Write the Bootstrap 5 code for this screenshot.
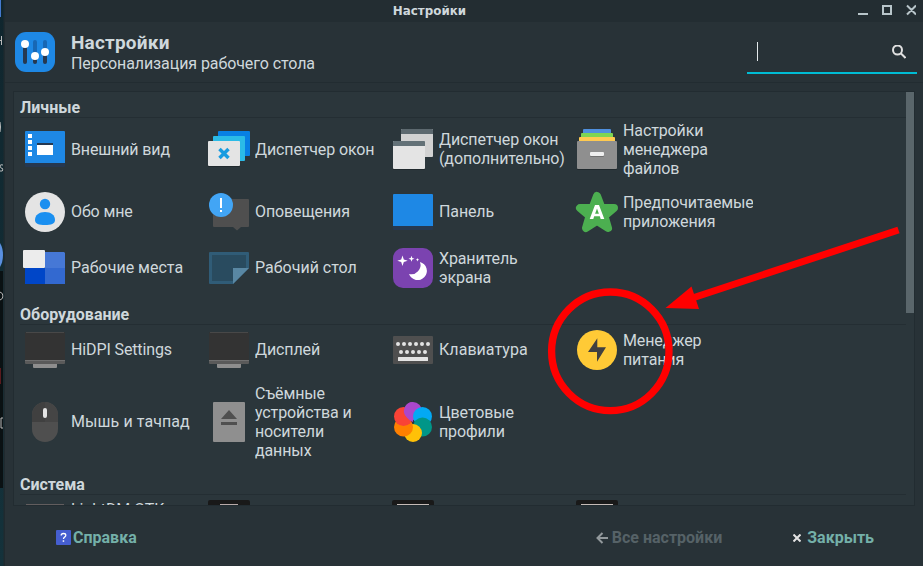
<!DOCTYPE html>
<html lang="ru">
<head>
<meta charset="utf-8">
<meta name="viewport" content="width=device-width, initial-scale=1">
<title>Настройки</title>
<link href="https://cdn.jsdelivr.net/npm/bootstrap@5.3.0/dist/css/bootstrap.min.css" rel="stylesheet">
<style>
body{width:923px;height:566px;overflow:hidden;background:#283237;color:#cfd8dc;font:16px/19px Roboto,"Noto Sans",sans-serif}
svg{display:block;flex:none}
.desk{width:5px;height:566px;flex:none}
.win{width:918px;height:566px}
.titlebar{height:22px;background:#232d32;font:bold 11.9px/22px "DejaVu Sans",sans-serif;padding-right:7px}
.titlebar .caption{padding-right:2px}
.head{height:61px;border-bottom:1px solid #222c31;padding:0 6px 0 10px}
.head .big{font-size:19px;line-height:22px;font-weight:700;letter-spacing:.2px}
.subtitle{letter-spacing:-.08px}
.search{width:170px;height:43px;margin-top:9px;border-bottom:2px solid #00bcd4;padding:0 11px 0 10px}
.caret{width:1px;height:19px;background:#e4e9eb}
.pane{width:902px;height:415px;margin:8px 0 0 8px;background:#2b363b;border:1px solid #222c31}
.thumb{width:8px;height:221px;background:#5a666b}
.groups{width:892px;height:413px;overflow:hidden;padding-left:6px}
.groups h2{font-size:16px;line-height:20px;font-weight:700;margin:0;padding-top:1px;border-bottom:1px solid #242e33;height:21px}
.tiles{display:grid;grid-template-columns:repeat(4,184px);padding-left:3px}
.personal{grid-template-rows:62px 62px 50px;margin-bottom:12px}
.hardware{grid-template-rows:48px 96px;margin-bottom:5px}
.system{grid-template-rows:56px}
.tile{gap:4px;min-width:0}
.tile span{width:130px;overflow:hidden;white-space:nowrap;letter-spacing:-.12px}
.tile .lower{padding-top:2px}
.foot{height:60px;padding:3px 49px 0 51px;font-weight:700;color:#74b0a9}
.dim{color:#566267}
</style>
<script src="https://cdn.jsdelivr.net/npm/bootstrap@5.3.0/dist/js/bootstrap.bundle.min.js"></script>
</head>
<body class="position-relative">
<div class="d-flex">
<svg class="desk" width="5" height="566" viewBox="0 0 5 566"><defs><linearGradient id="wall" x2="0" y2="1"><stop stop-color="#10262e"/><stop offset="1" stop-color="#14323b"/></linearGradient></defs>
<path fill="url(#wall)" d="M0 0h5v566H0z"/><path fill="#0a1113" d="M0 271h3v217H0z"/><path fill="#4479cf" d="M0 0h1v17H0z"/><path fill="#5a8fe0" d="M0 243q3 5 3 12t-3 12z"/><path fill="#5a1a1e" d="M0 368h1v16H0z"/><path d="M1.500 36v9M0 40.500h1.500M3 165q-3-1-3 1t3 3q0 3-3 2M0 292q3 1 3 4t-3 4M3 418H1v10h2M0 122q1 5 0 10" fill="none" stroke="#bbb"/><path fill="#202a2f" d="M3.500 0h1.500v566H3.500z"/></svg>
<main class="win d-flex flex-column">
  <div class="titlebar d-flex align-items-center">
    <div class="caption flex-grow-1 text-center">Настройки</div>
    <svg width="60" height="22" viewBox="0 0 60 22" fill="none" stroke="#b8c5ca" stroke-width="2"><path d="M2 14h10M27 6h8v8h-8zM51 5.500l9 9M60 5.500l-9 9"/></svg>
  </div>
  <header class="head d-flex">
    <svg class="mt-2" style="margin-right:16px" width="40" height="44" viewBox="0 0 40 44"><rect y="2" width="40" height="40" rx="11" fill="#1e88e5"/><g stroke-width="4" stroke-linecap="round"><path stroke="#1867b4" d="M10 12v10M20 12v18M30 12v10"/><path stroke="#263850" d="M10 14v18M20 28v4M30 24v8"/></g><g fill="#fff"><circle cx="10" cy="14" r="4"/><circle cx="20" cy="26" r="4"/><circle cx="30" cy="22" r="4"/></g></svg>
    <div class="flex-grow-1" style="padding-top:10px"><div class="big">Настройки</div><div class="subtitle">Персонализация рабочего стола</div></div>
    <div class="search d-flex align-items-center justify-content-between"><div class="caret"></div><svg width="14" height="14" viewBox="0 0 14 14" fill="none" stroke="#e0e0e0" stroke-width="2"><circle cx="5.500" cy="5" r="4.500"/><path d="M8.500 8l5 5"/></svg></div>
  </header>
  <section class="pane d-flex">
    <div class="groups">
      <h2 style="margin-top:5px">Личные</h2>
      <div class="tiles personal">
        <div class="tile d-flex align-items-center"><svg width="44" height="44"><rect x="2" y="5" width="40" height="35" rx="1" fill="#263850"/><path fill="#1e88e5" d="M2 36V5q0-1 1-1h38q1 0 1 1v31z"/><path fill="#fff" d="M5 7h4v4H5zM5 13h4v4H5zM5 19h4v4H5zM5 25h4v4H5zM14 17h16v11H14z"/><path fill="#263850" d="M14 16h16v2H14z"/></svg><span>Внешний вид</span></div>
        <div class="tile d-flex align-items-center"><svg width="44" height="44"><rect x="11" y="4" width="32" height="25" rx="1" fill="#0880e4"/><rect x="6" y="9" width="32" height="25" rx="1" fill="#2bbbe7"/><rect x="1" y="15" width="32" height="25" rx="1" fill="#20292d"/><rect x="1" y="14" width="32" height="25" rx="1" fill="#e4e4e4"/><path d="M12.500 22l9 9M21.500 22l-9 9" stroke="#179be0" stroke-width="3.500"/></svg><span>Диспетчер окон</span></div>
        <div class="tile d-flex align-items-center"><svg width="44" height="44"><rect x="10" y="2" width="32" height="28" rx="1" fill="#d2d2d2"/><path fill="#5d696f" d="M10 7V3q0-1 1-1h30q1 0 1 1v4z"/><rect x="2" y="14" width="32" height="29" rx="1" fill="#20292d"/><rect x="2" y="14" width="32" height="28" rx="1" fill="#e4e4e4"/><path fill="#637177" d="M2 19v-4q0-1 1-1h30q1 0 1 1v4z"/></svg><span>Диспетчер окон<br>(дополнительно)</span></div>
        <div class="tile d-flex align-items-center"><svg width="44" height="44"><rect x="8" y="2" width="28" height="6" rx="1" fill="#4f90de"/><rect x="6" y="6" width="32" height="6" rx="1" fill="#7ed552"/><rect x="4" y="10" width="36" height="6" rx="1" fill="#ffca50"/><rect x="2" y="15" width="40" height="28" rx="1" fill="#20292d"/><rect x="2" y="14" width="40" height="28" rx="1" fill="#8f8f8f"/><rect x="15" y="26" width="14" height="4" rx="1" fill="#707070"/><rect x="15" y="25" width="14" height="4" rx="1" fill="#eee"/></svg><span>Настройки<br>менеджера<br>файлов</span></div>

        <div class="tile d-flex align-items-center"><svg width="44" height="44"><circle cx="22" cy="23" r="20" fill="#e4e4e4"/><g fill="#1a8ff0"><circle cx="22" cy="15" r="5.200"/><path d="M12 31c0-5 4-8 10-8s10 3 10 8c0 4-4 5-10 5s-10-1-10-5z"/></g></svg><span>Обо мне</span></div>
        <div class="tile d-flex align-items-center"><svg width="44" height="44"><path fill="#4f4f4f" d="M7 10h34q1 0 1 1v26q0 1-1 1h-7l-4 3.500-4-3.500H7q-1 0-1-1V11q0-1 1-1z"/><circle cx="14" cy="16" r="12" fill="#42a5f5"/><path fill="#fff" d="M13 9h2v10h-2zM13 21h2v2h-2z"/></svg><span>Оповещения</span></div>
        <div class="tile d-flex align-items-center"><svg width="44" height="44"><rect x="2" y="6" width="40" height="35" rx="1" fill="#263850"/><path fill="#1e88e5" d="M2 37V6q0-1 1-1h38q1 0 1 1v31z"/></svg><span>Панель</span></div>
        <div class="tile d-flex align-items-center"><svg width="44" height="44"><path fill="#4caf50" stroke="#4caf50" stroke-width="8" stroke-linejoin="round" d="M22 7l4.500 12H39l-9.500 8L33 39l-11-7-11 7 3.500-12L5 19h12.500z"/><path fill="#fff" fill-rule="evenodd" d="M20 16h4l5.300 14h-3.600l-.9-2.700h-5.600l-.9 2.700h-3.600zM22 19.500l-1.900 5.300h3.800z"/></svg><span class="lower">Предпочитаемые<br>приложения</span></div>

        <div class="tile d-flex align-items-center"><svg width="44" height="44"><path fill="#4678d6" d="M22 7h19l1 1v15H22z"/><path fill="#0046c8" d="M2 23h20v16H2z"/><path fill="#3369d0" d="M22 23h20v16H22z"/><rect y="5" width="22" height="18" rx="1" fill="#ececec"/></svg><span style="letter-spacing:0">Рабочие места</span></div>
        <div class="tile d-flex align-items-center"><svg width="44" height="44"><path fill="#305c77" d="M3 7h38q1 0 1 1v15L26 39H3q-1 0-1-1V8q0-1 1-1z"/><path fill="#294b5f" d="M5 10h34v13H26v13H5z"/><path fill="#5987a3" d="M26 23h16L26 39z"/></svg><span style="letter-spacing:0">Рабочий стол</span></div>
        <div class="tile d-flex align-items-center"><svg width="44" height="44"><rect x="2" y="3" width="40" height="40" rx="10" fill="#7b43b0"/><path fill="#fff" d="M29 17A9.200 9.200 0 1 1 18 29 9.300 9.300 0 0 0 29 17zM11.500 10.500l1.300 3.900 3.900 1.300-3.900 1.300-1.300 3.900-1.300-3.900-3.900-1.300 3.900-1.300zM20.500 10.800l.8 2.200 2.200.8-2.200.8-.8 2.200-.8-2.200-2.200-.8 2.200-.8zM26.500 13l.5 1.200 1.200.5-1.200.5-.5 1.200-.5-1.200-1.200-.5 1.200-.5z"/></svg><span class="lower">Хранитель<br>экрана</span></div>
      </div>
      <h2>Оборудование</h2>
      <div class="tiles hardware">
        <div class="tile d-flex align-items-center"><svg width="44" height="44"><path fill="#8e8e8e" d="M10 36h24v4q0 1-1 1H11q-1 0-1-1z"/><path fill="#333" d="M2 33V6q0-1 1-1h38q1 0 1 1v27z"/><path fill="#484848" d="M3 5h38v1H3z"/><path fill="#5a5a5a" d="M2 33h40v3q0 1-1 1H3q-1 0-1-1z"/><path fill="#707070" d="M2 33h40v1H2z"/></svg><span>HiDPI Settings</span></div>
        <div class="tile d-flex align-items-center"><svg width="44" height="44"><path fill="#8e8e8e" d="M10 36h24v4q0 1-1 1H11q-1 0-1-1z"/><path fill="#333" d="M2 33V6q0-1 1-1h38q1 0 1 1v27z"/><path fill="#484848" d="M3 5h38v1H3z"/><path fill="#5a5a5a" d="M2 33h40v3q0 1-1 1H3q-1 0-1-1z"/><path fill="#707070" d="M2 33h40v1H2z"/></svg><span>Дисплей</span></div>
        <div class="tile d-flex align-items-center"><svg width="44" height="44"><rect x="2" y="9" width="40" height="28" rx="1" fill="#4f4f4f"/><path d="M7 17h30.100M10 25h24.100" stroke="#e4e4e4" stroke-width="4" stroke-linecap="round" stroke-dasharray="0 6"/><rect x="7" y="30" width="30" height="4" rx=".5" fill="#e4e4e4"/></svg><span style="letter-spacing:.05px">Клавиатура</span></div>
        <div class="tile d-flex align-items-center"><svg width="44" height="44"><circle cx="22" cy="23" r="20" fill="#ffca36"/><path fill="#404040" d="M22.300 11.300L13 25h9v9.700l9-14.400h-8.700z"/></svg><span class="lower">Менеджер<br>питания</span></div>
        <div class="tile d-flex align-items-center"><svg width="44" height="44"><rect x="9" y="3" width="26" height="40" rx="13" fill="#4f4f4f"/><path fill="#404040" d="M9 23v-7a13 13 0 0 1 13-13v20z"/><path fill="#454545" d="M35 23v-7a13 13 0 0 0-13-13v20z"/><rect x="20" y="9" width="4" height="10" rx="2" fill="#e4e4e4"/></svg><span style="letter-spacing:.08px">Мышь и тачпад</span></div>
        <div class="tile d-flex align-items-center"><svg width="44" height="44"><rect x="6" y="3" width="32" height="40" rx="1" fill="#8f8f8f"/><path fill="#4f4f4f" d="M22 11l8 9H14zM14 23h16v3H14z"/></svg><span class="lower">Съёмные<br>устройства и<br>носители<br>данных</span></div>
        <div class="tile d-flex align-items-center"><svg width="44" height="44"><circle cx="22" cy="12" r="9" fill="#ab47cc"/><circle cx="31.500" cy="17.500" r="9.500" fill="#03a9f4"/><circle cx="31.500" cy="28" r="9.500" fill="#009688"/><circle cx="22" cy="34" r="9" fill="#ffc107"/><circle cx="12.500" cy="28" r="9.500" fill="#ff8000"/><circle cx="12.500" cy="17.500" r="9.500" fill="#f94336"/><path fill="#ab47cc" d="M22 3a9 9 0 0 0-6 15.700q2.500 3.300 6 4.300z"/></svg><span class="lower">Цветовые<br>профили</span></div>
      </div>
      <h2>Система</h2>
      <div class="tiles system">
        <div class="tile d-flex align-items-start" style="padding-top:5px"><svg width="44" height="44"><path fill="#333" d="M2 5h40v28H2z"/><path fill="#625d5e" d="M3 4h38v1H3z"/></svg><span>LightDM GTK+</span></div>
        <div class="tile d-flex align-items-start" style="padding-top:5px"><svg width="44" height="44"><rect x="1" width="42" height="40" rx="2" fill="#191919"/><path fill="#b8aaa9" d="M13 4h18v6H13z"/></svg></div>
        <div class="tile d-flex align-items-start" style="padding-top:5px"><svg width="44" height="44"><rect x="1" width="42" height="40" rx="2" fill="#191919"/><path fill="#c5bbb7" d="M6 4h32v6H6z"/></svg></div>
        <div class="tile d-flex align-items-start" style="padding-top:5px"><svg width="44" height="44"><rect x="1" width="42" height="40" rx="2" fill="#191919"/><path fill="#c5bbb7" d="M6 4h32v6H6z"/></svg></div>
      </div>
    </div>
    <div class="thumb"></div>
  </section>
  <footer class="foot d-flex align-items-center">
    <div class="d-flex align-items-center me-auto" style="gap:2px"><svg width="15" height="15"><rect width="15" height="15" rx="1" fill="#455ed0"/><path d="M5.200 5.500q0-2 2.300-2t2.300 1.800q0 1-1.200 1.800T7.500 9" fill="none" stroke="#fff" stroke-width="1.300"/><path fill="#fff" d="M6.700 10.300h1.500v1.500H6.700z"/></svg>Справка</div>
    <div class="dim d-flex align-items-center" style="gap:4px;margin-right:71px"><svg width="12" height="12" fill="none" stroke="#92999c" stroke-width="2"><path d="M12 6H2M6.500 1l-5 5 5 5"/></svg>Все настройки</div>
    <div class="d-flex align-items-center" style="gap:6px"><svg width="8" height="8" stroke="#e4e4e4" stroke-width="2"><path d="M.5.500l7 7M7.500.500l-7 7"/></svg>Закрыть</div>
  </footer>
</main>
</div>
<svg class="position-absolute top-0 start-0" width="923" height="566"><ellipse cx="610.300" cy="351.300" rx="58.700" ry="59.300" fill="none" stroke="red" stroke-width="7.300"/><path stroke="red" stroke-width="7" d="M898.500 230L694 297.500"/><path fill="red" d="M665.500 308l26-21.500L699 309z"/></svg>
</body>
</html>
